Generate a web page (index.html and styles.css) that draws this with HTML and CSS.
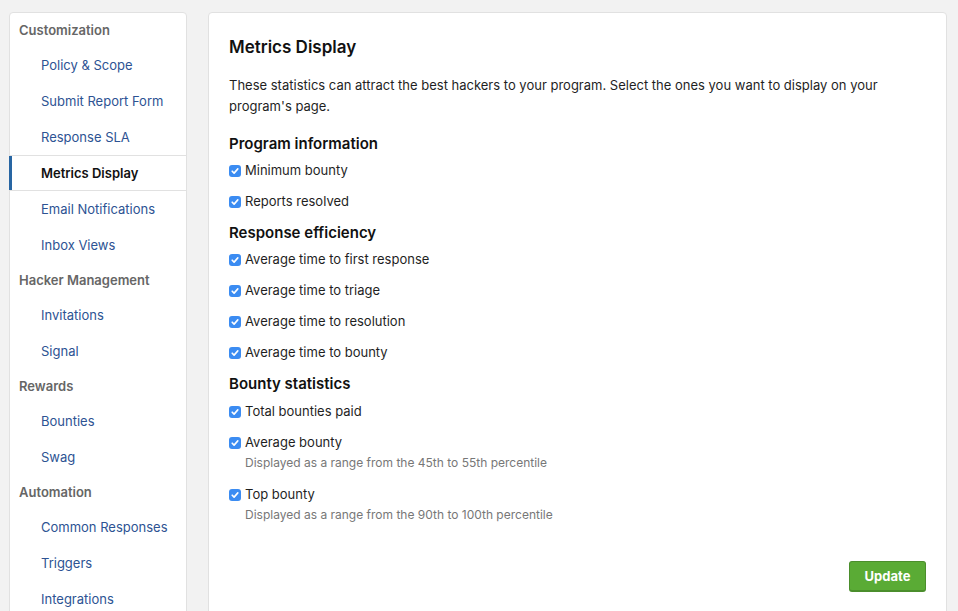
FILE: index.html
```html
<!DOCTYPE html>
<html>
<head>
<meta charset="utf-8">
<link rel="stylesheet" href="styles.css">
</head>
<body>
<div class="layout">
  <nav class="sidebar">
    <div class="nav-header">Customization</div>
    <a class="nav-item">Policy &amp; Scope</a>
    <a class="nav-item">Submit Report Form</a>
    <a class="nav-item">Response SLA</a>
    <a class="nav-item active">Metrics Display</a>
    <a class="nav-item">Email Notifications</a>
    <a class="nav-item">Inbox Views</a>
    <div class="nav-header">Hacker Management</div>
    <a class="nav-item">Invitations</a>
    <a class="nav-item">Signal</a>
    <div class="nav-header">Rewards</div>
    <a class="nav-item">Bounties</a>
    <a class="nav-item">Swag</a>
    <div class="nav-header">Automation</div>
    <a class="nav-item">Common Responses</a>
    <a class="nav-item">Triggers</a>
    <a class="nav-item">Integrations</a>
  </nav>
  <main class="panel">
    <h1 class="title">Metrics Display</h1>
    <p class="intro">These statistics can attract the best hackers to your program. Select the ones you want to display on your program's page.</p>

    <h2 class="group-title first">Program information</h2>
    <label class="check"><span class="box"></span>Minimum bounty</label>
    <label class="check"><span class="box"></span>Reports resolved</label>

    <h2 class="group-title">Response efficiency</h2>
    <label class="check"><span class="box"></span>Average time to first response</label>
    <label class="check"><span class="box"></span>Average time to triage</label>
    <label class="check"><span class="box"></span>Average time to resolution</label>
    <label class="check"><span class="box"></span>Average time to bounty</label>

    <h2 class="group-title last">Bounty statistics</h2>
    <label class="check"><span class="box"></span>Total bounties paid</label>
    <div class="check with-help">
      <label class="check-line"><span class="box"></span>Average bounty</label>
      <div class="help">Displayed as a range from the 45th to 55th percentile</div>
    </div>
    <div class="check with-help">
      <label class="check-line"><span class="box"></span>Top bounty</label>
      <div class="help">Displayed as a range from the 90th to 100th percentile</div>
    </div>

    <div class="actions">
      <button class="btn-update">Update</button>
    </div>
  </main>
</div>
</body>
</html>
```

FILE: styles.css
```css
* { box-sizing: border-box; }
html, body { margin: 0; padding: 0; }
body {
  background: #f2f2f2;
  font-family: Inter, "Noto Sans", Roboto, sans-serif;
  font-size: 13px;
  color: #1f1f1f;
  height: 611px;
  overflow: hidden;
}
.layout {
  display: flex;
  align-items: flex-start;
  gap: 21px;
  padding: 12px 11px 0 9px;
}
.sidebar {
  width: 178px;
  flex: none;
  background: #fff;
  border: 1px solid #e1e1e1;
  border-radius: 4px;
  display: flex;
  flex-direction: column;
}
.nav-header {
  height: 34px;
  line-height: 34px;
  padding-left: 9px;
  font-weight: 600;
  color: #666;
}
.nav-item {
  height: 36px;
  line-height: 36px;
  padding-left: 31px;
  color: #2d5393;
  text-decoration: none;
}
.nav-item.active {
  color: #111;
  font-weight: 600;
  border-top: 1px solid #e1e1e1;
  border-bottom: 1px solid #e1e1e1;
  box-shadow: inset 3px 0 0 #2866a3;
  margin-left: -1px;
  padding-left: 32px;
  line-height: 34px;
}
.panel {
  flex: 1;
  background: #fff;
  border: 1px solid #e1e1e1;
  border-radius: 4px;
  padding: 24px 20px 19px 20px;
  min-height: 620px;
}
.title {
  margin: 0;
  font-size: 17px;
  font-weight: 600;
  line-height: 20px;
  color: #111;
}
.intro {
  margin: 18px 0 0;
  line-height: 21px;
  color: #1f1f1f;
}
.group-title {
  margin: 4px 0 0;
  font-size: 15px;
  font-weight: 600;
  line-height: 23px;
  color: #111;
}
.group-title.first { margin-top: 15px; }
.group-title.last { margin-bottom: 1px; }
.check {
  display: flex;
  flex-direction: row;
  align-items: center;
  height: 31px;
  line-height: 31px;
}
.check.with-help {
  flex-direction: column;
  align-items: flex-start;
  height: auto;
  line-height: normal;
}
.check-line {
  display: flex;
  align-items: center;
  height: 31px;
  line-height: 31px;
}
.help {
  color: #777;
  font-size: 12px;
  line-height: 15px;
  padding-left: 16px;
  margin-top: -3px;
  margin-bottom: 9px;
}
.box {
  width: 12px;
  height: 12px;
  border-radius: 3px;
  background: #3b8cf2 url("data:image/svg+xml;utf8,<svg xmlns='http://www.w3.org/2000/svg' width='12' height='12' viewBox='0 0 12 12'><path d='M3.2 6.2 L5.1 8.1 L8.8 3.9' fill='none' stroke='white' stroke-width='1.6' stroke-linecap='round' stroke-linejoin='round'/></svg>") center/12px 12px no-repeat;
  margin-right: 4px;
  flex: none;
}
.actions {
  display: flex;
  justify-content: flex-end;
  margin-top: 30px;
}
.btn-update {
  font-family: inherit;
  font-size: 13px;
  font-weight: 700;
  color: #fff;
  background: #5aab35;
  border: 1px solid #4b8e2c;
  border-bottom-width: 2px;
  border-radius: 3px;
  width: 77px;
  height: 31px;
  padding: 0;
}
```
